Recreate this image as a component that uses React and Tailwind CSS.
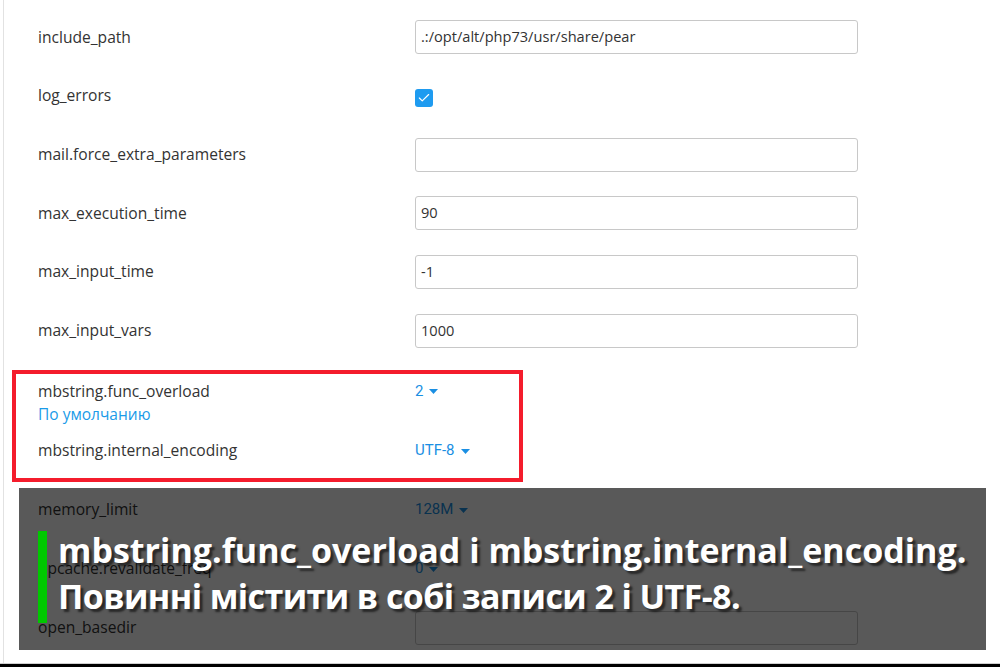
import { Check } from 'lucide-react'

const label = "font-['Open_Sans',sans-serif] text-[15.6px] text-[#333]"

function Caret() {
  return (
    <svg width="9" height="5" viewBox="0 0 9 5" className="ml-[6px] mt-[1px]">
      <path d="M0 0h9L4.5 5z" fill="currentColor" />
    </svg>
  )
}

function TextField({ value }) {
  return (
    <div className="w-[443px] h-[34px] border border-[#c8c8c8] rounded-[3px] bg-white flex items-center px-[5px] font-['Open_Sans',sans-serif] text-[14.6px] text-[#333]">
      {value}
    </div>
  )
}

function Select({ value }) {
  return (
    <div className="flex items-center font-['Roboto',sans-serif] text-[15px] text-[#1a8fe3]">
      {value}
      <Caret />
    </div>
  )
}

function Row({ name, tight, children }) {
  return (
    <div className={`${tight ? 'h-[58.7px]' : 'h-[59px]'} flex items-center`}>
      <div className={`w-[377px] ${label}`}>{name}</div>
      <div>{children}</div>
    </div>
  )
}

export default function App() {
  return (
    <div className="w-[1000px] h-[667px] flex flex-col bg-white overflow-hidden">
      <div className="relative flex-1 ml-[3px] border-l border-[#e2e2e2] pl-[34px] pt-[8px]">
        <Row tight name="include_path"><TextField value=".:/opt/alt/php73/usr/share/pear" /></Row>
        <Row tight name="log_errors">
          <div className="w-[18px] h-[18px] mt-[3px] rounded-[3px] bg-[#1e9bf0] flex items-center justify-center">
            <Check size={14} strokeWidth={2} className="text-white" />
          </div>
        </Row>
        <Row tight name="mail.force_extra_parameters"><TextField value="" /></Row>
        <Row tight name="max_execution_time"><TextField value="90" /></Row>
        <Row tight name="max_input_time"><TextField value="-1" /></Row>
        <Row tight name="max_input_vars"><TextField value="1000" /></Row>
        <div className="h-[61px] flex items-start pt-[21px]">
          <div className="w-[377px] flex flex-col">
            <div className={`${label} leading-[20px]`}>mbstring.func_overload</div>
            <div className="font-['Open_Sans',sans-serif] text-[15.5px] leading-[20px] mt-[3px] text-[#1a9be8]">По умолчанию</div>
          </div>
          <div className="h-[20px] flex items-center"><Select value="2" /></div>
        </div>
        <Row name="mbstring.internal_encoding"><Select value="UTF-8" /></Row>
        <Row name="memory_limit"><Select value="128M" /></Row>
        <Row name="opcache.revalidate_freq"><Select value="0" /></Row>
        <Row name="open_basedir"><TextField value="" /></Row>

        {/* annotation frame */}
        <div className="absolute left-[8px] top-[370px] w-[511px] h-[112px] border-4 border-[#f41c2c]" />

        {/* caption overlay */}
        <div className="absolute left-[15px] top-[488px] w-[967px] h-[162px] bg-black/65">
          <div className="absolute left-[19px] top-[43px] w-[9px] h-[92px] bg-[#00c800]" />
          <div className="absolute left-[39px] top-[39px] font-['Open_Sans',sans-serif] font-bold text-[34px] leading-[46px] text-white whitespace-nowrap [text-shadow:3px_3px_2px_rgba(0,0,0,0.55)]">
            <div>mbstring.func_overload і mbstring.internal_encoding.</div>
            <div className="tracking-[-0.6px]">Повинні містити в собі записи 2 і UTF-8.</div>
          </div>
        </div>
      </div>
      <div className="h-[4px] border-t border-[#cfcfcf] bg-black" />
    </div>
  )
}
